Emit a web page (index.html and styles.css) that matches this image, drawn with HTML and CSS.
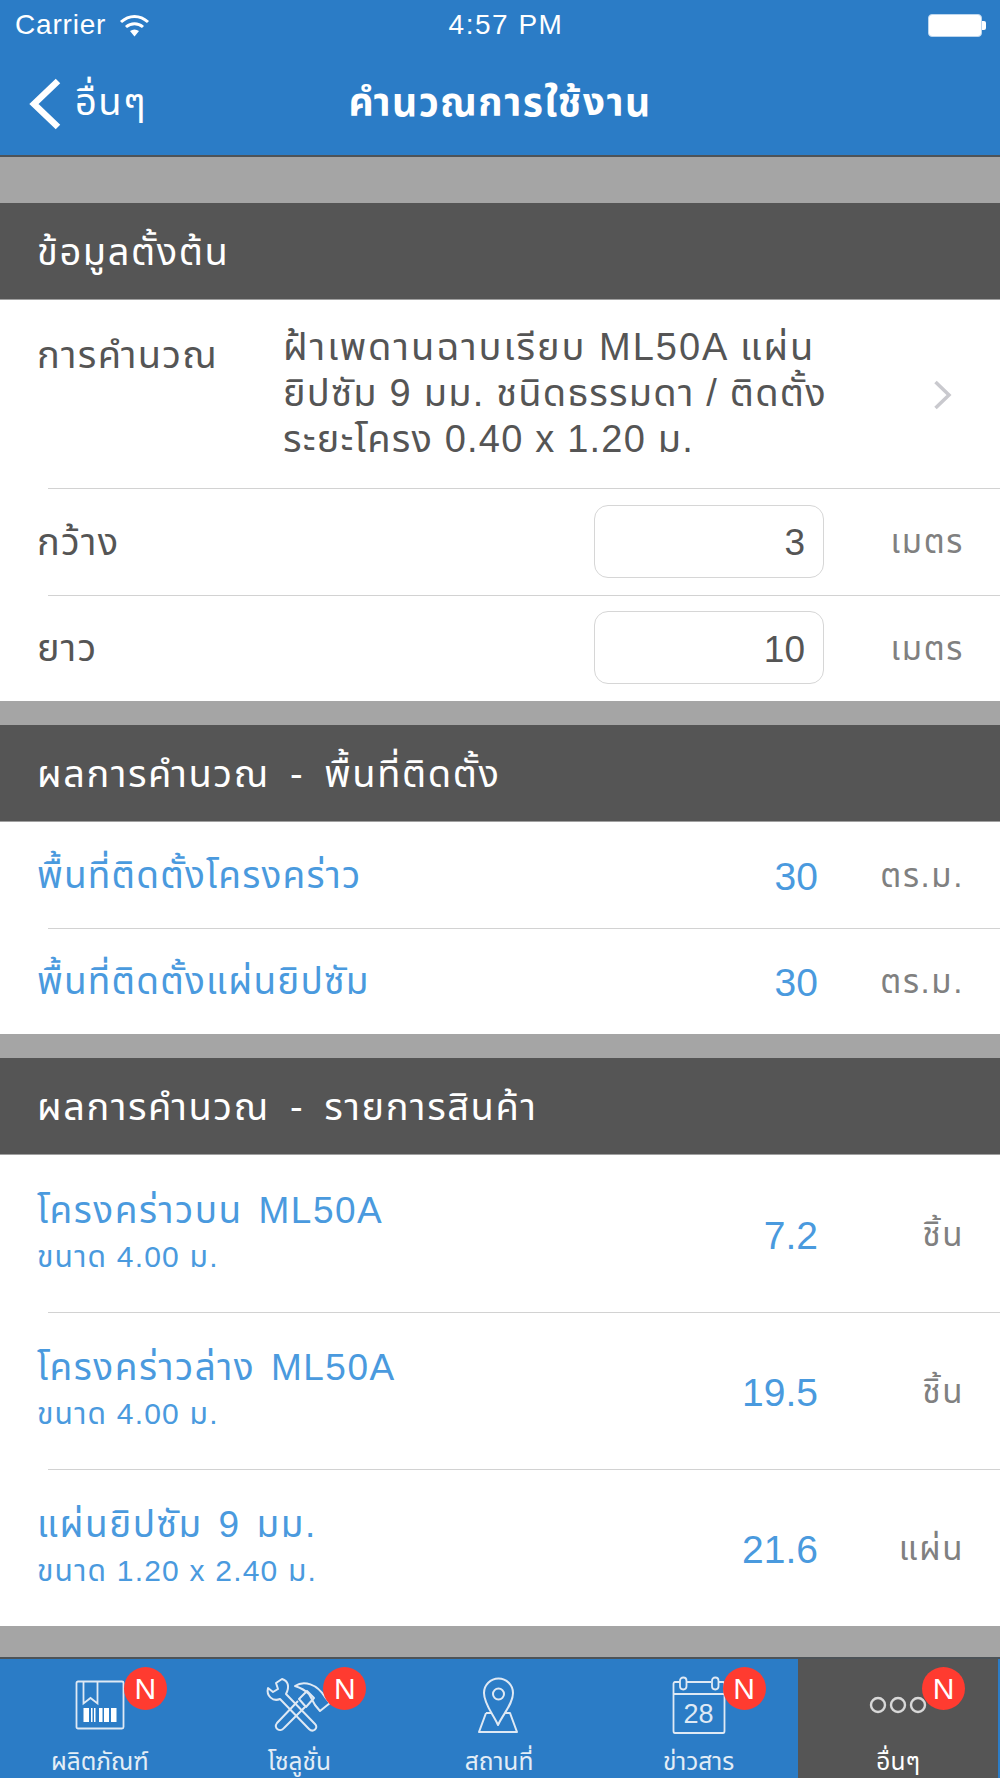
FILE: index.html
```html
<!DOCTYPE html>
<html lang="th">

<head>
    <meta charset="UTF-8" />
    <meta name="viewport" content="width=device-width, initial-scale=1.0" />
    <title>คำนวณการใช้งาน</title>
    <link rel="stylesheet" href="styles.css">
</head>

<body>
    <header class="topbar">
        <div class="status">
            <div class="status-left">
                <span>Carrier</span>
                <svg class="wifi" width="31" height="23" viewBox="0 0 31 23">
                    <path d="M2 8C10 0.500 21 0.500 29 8M7 13C12 8.500 19 8.500 24 13" fill="none" stroke="#fff" stroke-width="3" />
                    <path d="M11 17C14 15 17 15 20 17L15.500 22.500Z" fill="#fff" />
                </svg>
            </div>
            <span class="clock">4:57 PM</span>
            <div class="battery"><div class="battery-fill"></div><div class="battery-tip"></div></div>
        </div>
        <nav class="nav">
            <a class="back">
                <svg width="34" height="52" viewBox="0 0 34 52">
                    <path d="M30 3L6 26L30 49" fill="none" stroke="#fff" stroke-width="6.500" />
                </svg>
                <span>อื่นๆ</span>
            </a>
            <h1 class="nav-title">คำนวณการใช้งาน</h1>
        </nav>
    </header>

    <main class="content">
        <section class="group">
            <h2 class="group-title">ข้อมูลตั้งต้น</h2>
            <div class="row calc-row">
                <div class="row-label">การคำนวณ</div>
                <div class="calc-value"><span class="line-wide">ฝ้าเพดานฉาบเรียบ ML50A แผ่น</span><br>ยิปซัม 9 มม. ชนิดธรรมดา / ติดตั้ง<br>ระยะโครง 0.40 x 1.20 ม.</div>
                <svg class="chevron" width="20" height="32" viewBox="0 0 20 32">
                    <path d="M2.500 3L16 16L2.500 29" fill="none" stroke="#c9c9ce" stroke-width="3.500" />
                </svg>
            </div>
            <div class="row input-row">
                <div class="row-label">กว้าง</div>
                <div class="input-box">3</div>
                <div class="unit">เมตร</div>
            </div>
            <div class="row input-row">
                <div class="row-label">ยาว</div>
                <div class="input-box">10</div>
                <div class="unit">เมตร</div>
            </div>
        </section>

        <section class="group">
            <h2 class="group-title">ผลการคำนวณ - พื้นที่ติดตั้ง</h2>
            <div class="row result-row">
                <div class="result-name">พื้นที่ติดตั้งโครงคร่าว</div>
                <div class="result-num">30</div>
                <div class="unit">ตร.ม.</div>
            </div>
            <div class="row result-row">
                <div class="result-name">พื้นที่ติดตั้งแผ่นยิปซัม</div>
                <div class="result-num">30</div>
                <div class="unit">ตร.ม.</div>
            </div>
        </section>

        <section class="group">
            <h2 class="group-title">ผลการคำนวณ - รายการสินค้า</h2>
            <div class="row product-row">
                <div class="product-info">
                    <div class="result-name">โครงคร่าวบน ML50A</div>
                    <div class="product-size">ขนาด 4.00 ม.</div>
                </div>
                <div class="result-num">7.2</div>
                <div class="unit">ชิ้น</div>
            </div>
            <div class="row product-row">
                <div class="product-info">
                    <div class="result-name">โครงคร่าวล่าง ML50A</div>
                    <div class="product-size">ขนาด 4.00 ม.</div>
                </div>
                <div class="result-num">19.5</div>
                <div class="unit">ชิ้น</div>
            </div>
            <div class="row product-row">
                <div class="product-info">
                    <div class="result-name">แผ่นยิปซัม 9 มม.</div>
                    <div class="product-size">ขนาด 1.20 x 2.40 ม.</div>
                </div>
                <div class="result-num">21.6</div>
                <div class="unit">แผ่น</div>
            </div>
        </section>
    </main>

    <footer class="tabbar">
        <div class="tab">
            <div class="tab-icon">
                <svg width="50" height="50" viewBox="0 0 50 50" fill="none" stroke="#dfe9f4" stroke-width="1.800">
                    <rect x="1.500" y="1.500" width="47" height="47" rx="1.500" />
                    <path d="M8.500 1.500V23.500L15.500 18L22.500 23.500V1.500" />
                    <g fill="#fff" stroke="none">
                        <rect x="8.500" y="28" width="5.500" height="14" />
                        <rect x="16" y="28" width="1.500" height="14" />
                        <rect x="19" y="28" width="1.500" height="14" />
                        <rect x="24" y="28" width="3.500" height="14" />
                        <rect x="29" y="28" width="5" height="14" />
                        <rect x="36" y="28" width="5.500" height="14" />
                    </g>
                </svg>
            </div>
            <div class="tab-label">ผลิตภัณฑ์</div>
            <span class="badge">N</span>
        </div>
        <div class="tab">
            <div class="tab-icon">
                <svg width="80" height="70" viewBox="0 0 80 70" fill="none" stroke="#dfe9f4" stroke-width="2" stroke-linejoin="round">
                    <path d="M23 9L17 13L19 19L14 22L9 18C7 26 14 32 21 29L50 59C54 63 60 58 56 54L27 24C31 16 29 11 23 9Z" />
                    <path d="M39 31L18 53C14 58 21 63 25 58L46 37" />
                    <path d="M40 29L48 21L55 28L47 37Z" />
                    <path d="M36 16C45 10 58 14 66 27L71 33L61 41L56 35L50 24C46 20 42 18 36 16Z" />
                </svg>
            </div>
            <div class="tab-label">โซลูชั่น</div>
            <span class="badge">N</span>
        </div>
        <div class="tab">
            <div class="tab-icon">
                <svg width="60" height="70" viewBox="0 0 60 70" fill="none" stroke="#dfe9f4" stroke-width="2" stroke-linejoin="round">
                    <path d="M29 55C24 44 15 34 15 23A14.500 14.500 0 0 1 44 23C44 34 34 44 29 55Z" />
                    <circle cx="29.500" cy="24" r="5.500" />
                    <path d="M17 43L10 62H48L41 43H36M17 43H22" />
                </svg>
            </div>
            <div class="tab-label">สถานที่</div>
        </div>
        <div class="tab">
            <div class="tab-icon">
                <svg width="54" height="58" viewBox="0 0 54 58" fill="none" stroke="#dfe9f4" stroke-width="1.800">
                    <path d="M8 6H3C2 6 1.500 7 1.500 8V55C1.500 56 2 57 3 57H51C52 57 52.500 56 52.500 55V8C52.500 7 52 6 51 6H46M15 6H39M1.500 18H52.500" />
                    <rect x="8" y="1.500" width="6.500" height="12" rx="3.200" />
                    <rect x="40" y="1.500" width="6.500" height="12" rx="3.200" />
                    <text class="cal-day" x="26.500" y="47" text-anchor="middle">28</text>
                </svg>
            </div>
            <div class="tab-label">ข่าวสาร</div>
            <span class="badge">N</span>
        </div>
        <div class="tab active">
            <div class="tab-icon">
                <svg width="58" height="18" viewBox="0 0 58 18" fill="none" stroke="#d8d8d8" stroke-width="2.400">
                    <circle cx="9" cy="9" r="7" />
                    <circle cx="29" cy="9" r="7" />
                    <circle cx="49" cy="9" r="7" />
                </svg>
            </div>
            <div class="tab-label">อื่นๆ</div>
            <span class="badge">N</span>
        </div>
    </footer>
</body>

</html>
```

FILE: styles.css
```css
* {
    box-sizing: border-box;
}

body {
    margin: 0;
    height: 1778px;
    overflow: hidden;
    display: flex;
    flex-direction: column;
    background-color: #a5a5a5;
    font-family: "Liberation Sans", "Noto Sans Thai", "Noto Sans", sans-serif;
    color: #555555;
}

.topbar {
    height: 157px;
    background-color: #2b7cc6;
    border-bottom: 2px solid #4d5358;
    color: white;
}

.status {
    height: 50px;
    padding: 0 14px 0 15px;
    display: flex;
    align-items: center;
    justify-content: space-between;
    position: relative;
    font-size: 28px;
}

.status-left {
    display: flex;
    align-items: center;
    gap: 13px;
    letter-spacing: 0.8px;
}

.clock {
    position: absolute;
    left: 0;
    right: 0;
    top: 10px;
    line-height: 30px;
    padding-left: 12px;
    text-align: center;
    letter-spacing: 1.5px;
}

.battery {
    display: flex;
    align-items: center;
}

.battery-fill {
    width: 54px;
    height: 23px;
    background-color: white;
    border: 1px solid #bcd6ee;
    border-radius: 4px;
}

.battery-tip {
    width: 4px;
    height: 9px;
    background-color: white;
    border-radius: 0 2px 2px 0;
}

.nav {
    height: 105px;
    display: flex;
    align-items: center;
    justify-content: center;
    position: relative;
}

.back {
    position: absolute;
    left: 28px;
    top: 25px;
    display: flex;
    align-items: center;
    gap: 13px;
    font-size: 38px;
    letter-spacing: 1.5px;
}

.nav-title {
    margin: 0;
    padding-top: 4px;
    font-size: 39px;
    font-weight: bold;
    letter-spacing: 1.5px;
}

.content {
    flex: 1;
    padding-top: 46px;
    display: flex;
    flex-direction: column;
    gap: 24px;
}

.group-title {
    margin: 0;
    height: 97px;
    padding-left: 37px;
    padding-top: 5px;
    display: flex;
    align-items: center;
    background-color: #555555;
    border-bottom: 1px solid #a0a0a0;
    color: white;
    font-size: 38px;
    font-weight: normal;
    letter-spacing: 1.6px;
    word-spacing: 8px;
}

.row {
    display: flex;
    align-items: center;
    background-color: white;
    padding-left: 37px;
    padding-right: 36px;
    position: relative;
}

.row + .row::before {
    content: "";
    position: absolute;
    top: 0;
    left: 48px;
    right: 0;
    height: 1px;
    background-color: #d2d2d2;
}

.row-label {
    flex: 1;
    padding-top: 4px;
    font-size: 38px;
    letter-spacing: 1.3px;
}

.calc-row {
    height: 188px;
    align-items: flex-start;
    padding-top: 24px;
}

.calc-row .row-label {
    flex: none;
    width: 246px;
}

.calc-value {
    flex: 1;
    font-size: 38px;
    line-height: 46px;
    letter-spacing: 1.2px;
}

.line-wide {
    letter-spacing: 2px;
}

.chevron {
    margin-top: 55px;
    margin-right: 11px;
}

.input-row {
    height: 106.5px;
}

.input-box {
    width: 230px;
    height: 73px;
    border: 1px solid #d6d6d6;
    border-radius: 14px;
    padding-top: 4px;
    padding-right: 18px;
    display: flex;
    align-items: center;
    justify-content: flex-end;
    font-size: 37px;
}

.unit {
    width: 140px;
    padding-top: 4px;
    text-align: right;
    font-size: 33px;
    letter-spacing: 1.6px;
    color: #808080;
}

.result-row {
    height: 106px;
}

.result-name {
    padding-top: 4px;
    font-size: 37px;
    letter-spacing: 1.2px;
    color: #4a9ade;
}

.result-row .result-name,
.product-info {
    flex: 1;
}

.result-num {
    padding-top: 4px;
    margin-right: 6px;
    font-size: 39px;
    color: #4a9ade;
}

.product-row {
    height: 157px;
}

.product-info {
    padding-bottom: 8px;
}

.product-info .result-name {
    padding-top: 0;
    line-height: 54px;
    letter-spacing: 1.5px;
    word-spacing: 4px;
}

.product-size {
    font-size: 30px;
    line-height: 38px;
    letter-spacing: 1.2px;
    color: #4a9ade;
}

.tabbar {
    height: 121px;
    padding-right: 2px;
    border-top: 2px solid #4d5358;
    background-color: #2b7cc6;
    display: flex;
}

.tab {
    flex: 1;
    position: relative;
    display: flex;
    flex-direction: column;
    align-items: center;
    color: #e3edf6;
    font-size: 24.5px;
}

.tab.active {
    background-color: #555555;
    color: white;
}

.tab-icon {
    height: 92px;
    display: flex;
    align-items: center;
    justify-content: center;
}

.tab-label {
    line-height: 22px;
}

.badge {
    position: absolute;
    top: 8px;
    left: calc(50% + 24px);
    width: 43px;
    height: 43px;
    border-radius: 50%;
    background-color: #ff3b30;
    color: white;
    display: flex;
    align-items: center;
    justify-content: center;
    font-size: 30px;
}

.cal-day {
    font-size: 27px;
    fill: #dfe9f4;
    stroke: none;
}
```
